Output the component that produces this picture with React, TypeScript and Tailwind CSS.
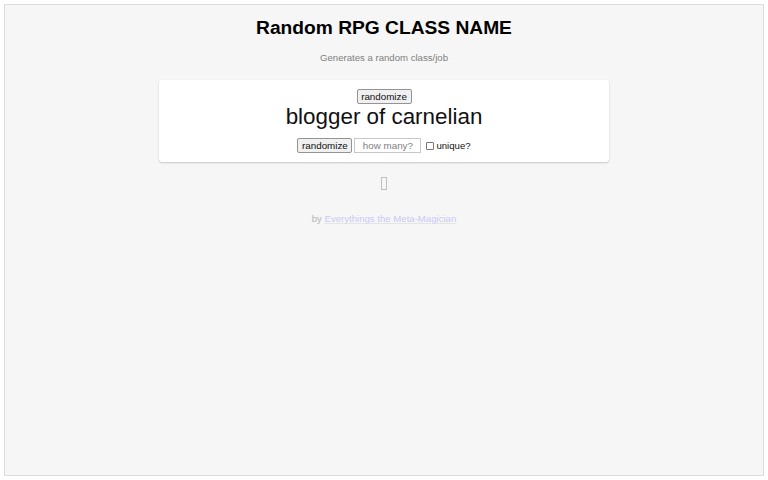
import React from 'react';

const btn =
  'h-[15px] w-[55px] rounded-[2px] border border-[#949494] bg-[#f0f0f0] text-[9.8px] leading-[13px] text-[#111111]';

export default function App() {
  return (
    <div className="h-[480px] w-[768px] bg-white p-[4px] font-['Liberation_Sans',sans-serif]">
      <div className="flex h-[472px] flex-col items-center border border-[#dcdcdc] bg-[#f6f6f6]">
        <h1 className="mt-[11px] text-[19.2px] leading-[24px] font-bold text-black">Random RPG CLASS NAME</h1>
        <p className="mt-[11px] text-[9.6px] leading-[14px] text-[#808080]">Generates a random class/job</p>

        <div className="mt-[15px] flex h-[82px] w-[450px] flex-col items-center rounded-[3px] bg-white pt-[9px] shadow-[0_1px_2px_rgba(0,0,0,0.2)]">
          <button className={btn}>randomize</button>
          <div className="text-[22.4px] leading-[26px] text-[#111111]">blogger of carnelian</div>
          <div className="mt-[8px] flex items-center">
            <button className={btn}>randomize</button>
            <input
              placeholder="how many?"
              className="ml-[2px] h-[15px] w-[67px] border border-[#c8c8c8] bg-white text-center text-[9.8px] placeholder:text-[#808080]"
            />
            <input type="checkbox" className="ml-[5px] h-[8px] w-[8px] appearance-none rounded-[1px] border border-[#767676] bg-white" />
            <label className="ml-[2px] text-[9.6px] leading-[14px] text-[#111111]">unique?</label>
          </div>
        </div>

        <svg className="mt-[15px]" width="6" height="13" viewBox="0 0 6 13">
          <rect x="0.5" y="0.5" width="5" height="12" fill="none" stroke="#c0c0c0" />
        </svg>

        <p className="mt-[22px] text-[9.6px] leading-[14px] text-[#b5b5b5]">
          by <a className="text-[#c9c9f5] underline decoration-[#e4e4e4]">Everythings the Meta-Magician</a>
        </p>
      </div>
    </div>
  );
}
